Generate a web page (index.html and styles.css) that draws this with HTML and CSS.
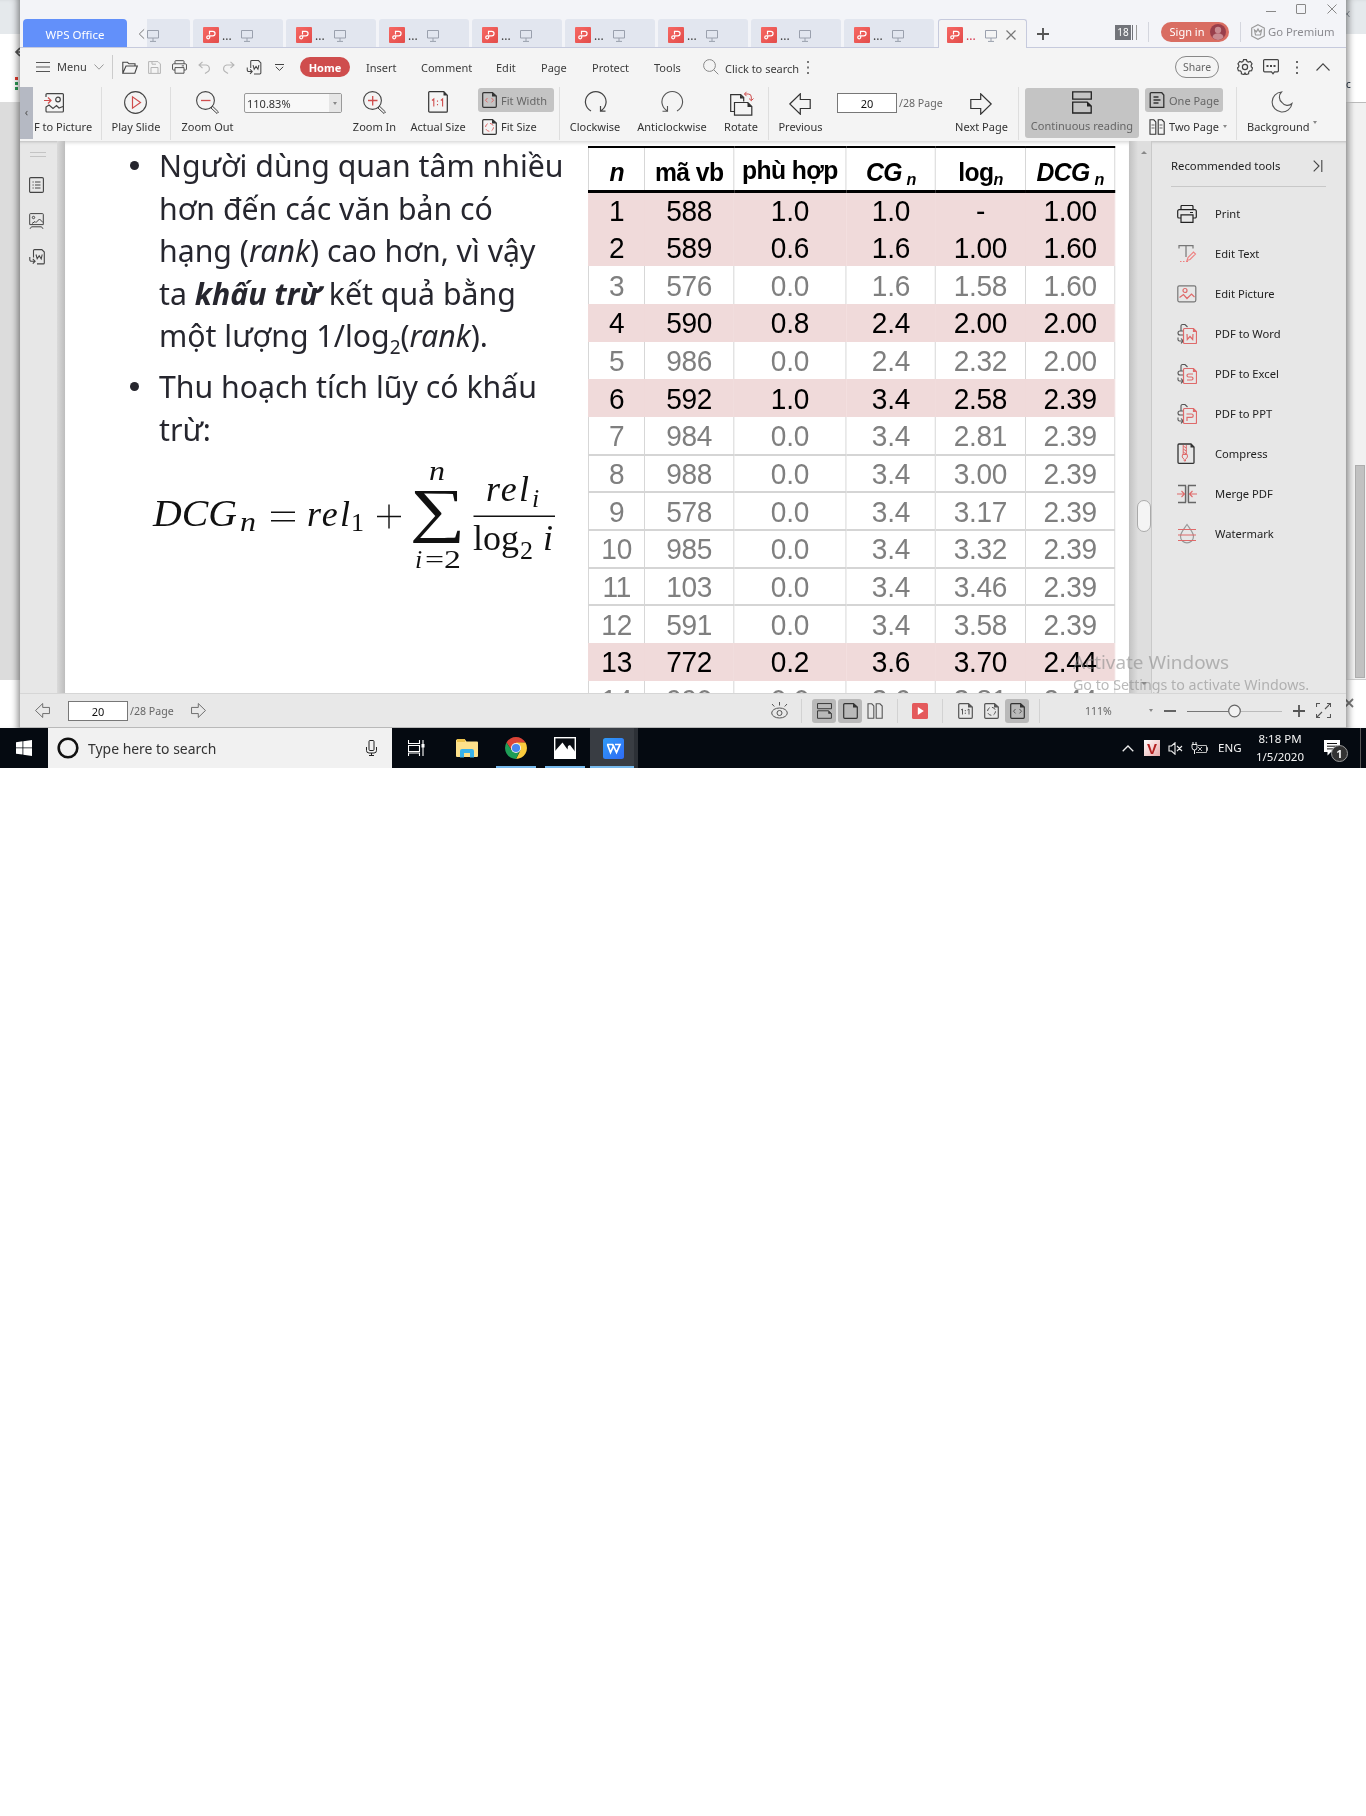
FILE: index.html
```html
<!DOCTYPE html>
<html lang="vi">
<head>
<meta charset="utf-8">
<title>WPS Office</title>
<link rel="stylesheet" href="styles.css">
</head>
<body>
<svg class="sprite" width="0" height="0">
  <defs>
    <linearGradient id="redg" x1="0" y1="0" x2="1" y2="1"><stop offset="0" stop-color="#f76863"/><stop offset="1" stop-color="#e24c4a"/></linearGradient>
    <linearGradient id="blueg" x1="0" y1="0" x2="1" y2="1"><stop offset="0" stop-color="#2f9bf8"/><stop offset="1" stop-color="#2f6bf5"/></linearGradient>
  </defs>
  <symbol id="pdf" viewBox="0 0 16 16"><rect width="16" height="16" rx="1" fill="url(#redg)"/><path d="M6.500 7.500V4.300h3.300a2.200 2.200 0 0 1 0 4.500H5.200a1.500 1.500 0 1 0 1.500 1.700V9" fill="none" stroke="#fff" stroke-width="1.200"/></symbol>
  <symbol id="monitor" viewBox="0 0 12 12"><path d="M.5.5h11v7.500H.5zM6 8v3M3 11.400h6" fill="none" stroke="#9aa0ad"/></symbol>
  <symbol id="prev" viewBox="0 0 22 22"><path d="M.8 11 11.300.8v5.700h9.900v9h-9.900v5.700z" fill="none" stroke="currentColor" stroke-width="1.200"/></symbol>
  <symbol id="next" viewBox="0 0 22 22"><path d="M21.200 11 10.700.8v5.700H.8v9h9.900v5.700z" fill="none" stroke="currentColor" stroke-width="1.200"/></symbol>
  <symbol id="print" viewBox="0 0 20 18"><path d="M4 4.500V1.500a1 1 0 0 1 1-1h10a1 1 0 0 1 1 1v3M4 13H2a1.300 1.300 0 0 1-1.300-1.300V6.300A1.500 1.500 0 0 1 2.200 4.700h15.600a1.500 1.500 0 0 1 1.500 1.600v5.400A1.300 1.300 0 0 1 18 13h-2M4 9.800h12v7.500H4zM13 7.500h3" fill="none" stroke="currentColor" stroke-width="1.200"/></symbol>
  <symbol id="toword" viewBox="0 0 16 16"><path d="M4.500 8.500V1.600A1 1 0 0 1 5.500.6h7.300l2.500 2.500v10.800a1 1 0 0 1-1 1H8M7 5.500l1.200 4.300 2-3 2 3 1-4.300M.8 8v2.700a1.500 1.500 0 0 0 1.500 1.500h3.500M3.800 9.900l2.300 2.300-2.300 2.500" fill="none" stroke="currentColor" stroke-width="1.100"/></symbol>
  <symbol id="pageframe" viewBox="0 0 15 16"><path d="M2 .7h8.500L14.300 4v10.300a1 1 0 0 1-1 1H1.700a1 1 0 0 1-1-1V1.700a1 1 0 0 1 1-1z" fill="none" stroke="currentColor" stroke-width="1.200"/><path d="M10 .5 14.500 4.500H10z" fill="currentColor"/></symbol>
  <symbol id="conv" viewBox="0 0 20 22"><path d="M4 8V3a1.500 1.500 0 0 1 1.500-1.500H8L10.500 4M6 8H3a2 2 0 0 0 0 4h3M1 14.500v2a1.500 1.500 0 0 0 1.500 1.500H6M4 15.500 6.300 18 4 20.300" fill="none" stroke="#555" stroke-width="1.100"/><path d="M7.500 5.500h9l3 3v11a1 1 0 0 1-1 1H7.500a1 1 0 0 1-1-1v-13a1 1 0 0 1 1-1zM16.500 5.500v3h3" fill="none" stroke="#df6a6a" stroke-width="1.200"/></symbol>
  <symbol id="cont" viewBox="0 0 20 23"><path d="M.7.8h18.600v7.400H.7zM.7 22V11.200h14.500l4 3.800v7z" fill="none" stroke="currentColor" stroke-width="1.300"/><path d="M15 11v4.400h4.500z" fill="currentColor"/></symbol>
  <symbol id="two" viewBox="0 0 16 16"><path d="M1 .8h3.800L6.800 3v12.200H1zM9.200.8H13L15.200 3v12.200h-6z" fill="none" stroke="currentColor" stroke-width="1.100"/></symbol>
</svg>

<div class="desktop">
  <div class="behind left">
    <div class="b-top"></div>
    <div class="b-tools">
      <svg class="back" viewBox="0 0 10 10"><path d="M6 1 2 5l4 4M2 5h8" fill="none" stroke="#555" stroke-width="1.700"/></svg>
      <div class="apps"><i></i><i></i><i></i></div>
    </div>
    <div class="b-main"></div>
    <div class="b-foot"></div>
  </div>

  <div class="window">
    <div class="tabbar">
      <div class="tab-home">WPS Office</div>
      <svg class="tab-chev" viewBox="0 0 8 12"><path d="M7 .7 1.500 6 7 11.300" fill="none" stroke="#666"/></svg>
      <div class="tab cut"><svg class="mon"><use href="#monitor"/></svg></div>
      <div class="tab"><svg class="pdf"><use href="#pdf"/></svg><span>...</span><svg class="mon"><use href="#monitor"/></svg></div>
      <div class="tab"><svg class="pdf"><use href="#pdf"/></svg><span>...</span><svg class="mon"><use href="#monitor"/></svg></div>
      <div class="tab"><svg class="pdf"><use href="#pdf"/></svg><span>...</span><svg class="mon"><use href="#monitor"/></svg></div>
      <div class="tab"><svg class="pdf"><use href="#pdf"/></svg><span>...</span><svg class="mon"><use href="#monitor"/></svg></div>
      <div class="tab"><svg class="pdf"><use href="#pdf"/></svg><span>...</span><svg class="mon"><use href="#monitor"/></svg></div>
      <div class="tab"><svg class="pdf"><use href="#pdf"/></svg><span>...</span><svg class="mon"><use href="#monitor"/></svg></div>
      <div class="tab"><svg class="pdf"><use href="#pdf"/></svg><span>...</span><svg class="mon"><use href="#monitor"/></svg></div>
      <div class="tab"><svg class="pdf"><use href="#pdf"/></svg><span>...</span><svg class="mon"><use href="#monitor"/></svg></div>
      <div class="tab active"><svg class="pdf"><use href="#pdf"/></svg><span>...</span><svg class="mon"><use href="#monitor"/></svg><svg class="x" viewBox="0 0 10 10"><path d="M.5.5l9 9M9.500.5l-9 9" stroke="#777" stroke-width="1.200"/></svg></div>
      <svg class="plus" viewBox="0 0 12 12"><path d="M6 0v12M0 6h12" stroke="#555" stroke-width="1.900"/></svg>
      <div class="account">
        <div class="winctl">
          <svg width="10" height="10"><path d="M0 7.500h10" stroke="#888"/></svg>
          <svg width="10" height="10"><path d="M1 .5h8a.5.500 0 0 1 .5.500v8a.5.500 0 0 1-.5.500H1A.5.500 0 0 1 .5 9V1A.5.500 0 0 1 1 .5z" fill="none" stroke="#888"/></svg>
          <svg width="10" height="10"><path d="M.5.5l9 9M9.500.5l-9 9" stroke="#888"/></svg>
        </div>
        <div class="acc-row">
          <span class="count">18</span><i class="stack"></i>
          <i class="vline v1"></i>
          <span class="signin">Sign in<svg width="16" height="16" viewBox="0 0 16 16"><circle cx="8" cy="8" r="8" fill="#993f4b"/><circle cx="8" cy="6" r="3.200" fill="#c98a90"/><path d="M2.500 13.500a5.500 4.200 0 0 1 11 0A8 8 0 0 1 8 16a8 8 0 0 1-5.500-2.500z" fill="#c98a90"/></svg></span>
          <i class="vline v2"></i>
          <svg class="crown" viewBox="0 0 14 16"><path d="M7 .7 13.300 4v8L7 15.300.7 12V4zM3.500 6l1 5h5l1-5-2 1.700L7 5 5.500 7.700z" fill="none" stroke="#999" stroke-width="1.200"/></svg>
          <span class="premium">Go Premium</span>
        </div>
      </div>
    </div>

    <div class="menubar">
      <svg class="burger" viewBox="0 0 14 10"><path d="M0 .5h14M0 5h14M0 9.500h14" stroke="#555"/></svg>
      <span class="m-menu">Menu</span>
      <svg class="m-chev" viewBox="0 0 10 6"><path d="M.5.5 5 5.200 9.500.5" fill="none" stroke="#999"/></svg>
      <i class="m-div"></i>
      <div class="quick">
        <svg width="16" height="13" viewBox="0 0 16 13"><path d="M.8 12.200V1.300h4.700L7 2.800h6v2M.8 12.200 4 5h11.300l-2.500 7.200z" fill="none" stroke="#444" stroke-width="1.100"/></svg>
        <svg width="13" height="13" viewBox="0 0 13 13"><path d="M.6.6h9.400l2.400 2.400v9.400H.6zM3 12V6.500h7V12M4 .6v2.600h4" fill="none" stroke="#b5b5b5"/></svg>
        <svg class="pr" width="15" height="14"><use href="#print"/></svg>
        <svg width="13" height="13" viewBox="0 0 13 13"><path d="M4.500.8 1 4l3.500 3.200M1 4h7.300a3.700 3.700 0 0 1 1 7L7 12.500" fill="none" stroke="#b5b5b5" stroke-width="1.100"/></svg>
        <svg width="13" height="13" viewBox="0 0 13 13"><path d="M8.500.8 12 4 8.500 7.200M12 4H4.700a3.700 3.700 0 0 0-1 7L6 12.500" fill="none" stroke="#b5b5b5" stroke-width="1.100"/></svg>
        <svg width="16" height="15"><use href="#toword"/></svg>
        <svg width="9" height="7" viewBox="0 0 9 7"><path d="M0 .5h9M.8 2.800 4.500 6.400 8.200 2.800" fill="none" stroke="#444"/></svg>
      </div>
      <span class="pill">Home</span>
      <span class="mi a">Insert</span><span class="mi b">Comment</span><span class="mi c">Edit</span><span class="mi d">Page</span><span class="mi e">Protect</span><span class="mi f">Tools</span>
      <svg class="find" viewBox="0 0 16 16"><circle cx="6.500" cy="6.500" r="5.900" fill="none" stroke="#888"/><path d="M10.700 10.700 15.300 15.300" stroke="#888"/></svg>
      <span class="mi g">Click to search</span>
      <svg class="dots" viewBox="0 0 3 13"><path d="M0 0h2v2H0zM0 5.500h2v2H0zM0 11h2v2H0z" fill="#777"/></svg>
      <span class="share">Share</span>
      <svg class="gear" viewBox="0 0 16 16"><path d="M6.600.7h2.800l.7 1.800 1.300.6 1.900-.6 1.700 2.200-.9 1.700.2 1.500 1.200 1-.9 2.700-1.900.2-1 1.100-.1 1.900-2.700.8L8 14l-.9 1.600-2.700-.8-.1-1.900-1-1.100-1.900-.2-.9-2.700 1.200-1 .2-1.500L1 4.700l1.700-2.200 1.900.6 1.300-.6z" fill="none" stroke="#444" stroke-width="1.200"/><circle cx="8" cy="8" r="2.600" fill="none" stroke="#444" stroke-width="1.200"/></svg>
      <svg class="chat" viewBox="0 0 16 16"><path d="M1.600.6h12.800a1 1 0 0 1 1 1v10.200a1 1 0 0 1-1 1h-3L10 14.800l-1.500-2H1.600a1 1 0 0 1-1-1V1.600a1 1 0 0 1 1-1z" fill="none" stroke="#444" stroke-width="1.200"/><path d="M3.500 6h2v2h-2zM7 6h2v2H7zM10.500 6h2v2h-2z" fill="#444"/></svg>
      <svg class="dots k" viewBox="0 0 3 13"><path d="M0 0h2v2H0zM0 5.500h2v2H0zM0 11h2v2H0z" fill="#666"/></svg>
      <svg class="up" viewBox="0 0 14 8"><path d="M.5 7.500 7 .8l6.500 6.700" fill="none" stroke="#444" stroke-width="1.100"/></svg>
    </div>

    <div class="ribbon">
      <div class="collapse">‹</div>
      <div class="tool pic"><svg width="20" height="20" viewBox="0 0 20 20"><path d="M2 4V1.600a1 1 0 0 1 1-1h15.400a1 1 0 0 1 1 1V18a1 1 0 0 1-1 1H3a1 1 0 0 1-1-1v-4l3-2 4 3.500 3.500-3 2.500 2.500 4-1.500" fill="none" stroke="#444" stroke-width="1.200"/><circle cx="14" cy="6.500" r="2.300" fill="none" stroke="#444" stroke-width="1.200"/><path d="M0 7.500h6.500M4 4.500l3 3-3 3" fill="none" stroke="#cf4d4d" stroke-width="1.200"/></svg><span>F to Picture</span></div>
      <i class="r-div"></i>
      <div class="tool play"><svg width="23" height="23" viewBox="0 0 23 23"><circle cx="11.500" cy="11.500" r="10.900" fill="none" stroke="#444" stroke-width="1.100"/><path d="M8.500 5.800v11.400l8-5.700z" fill="none" stroke="#cf4d4d" stroke-width="1.200"/></svg><span>Play Slide</span></div>
      <i class="r-div"></i>
      <div class="tool zo"><svg width="23" height="23" viewBox="0 0 23 23"><circle cx="9.500" cy="9.500" r="8.900" fill="none" stroke="#444" stroke-width="1.100"/><path d="m15 17 1.500-1.800 6 5.800-1.500 1.500z" fill="none" stroke="#444"/><path d="M5 9.500h9.500" stroke="#cf4d4d" stroke-width="1.300"/></svg><span>Zoom Out</span></div>
      <div class="combo"><span>110.83%</span><b></b></div>
      <div class="tool zi"><svg width="23" height="23" viewBox="0 0 23 23"><circle cx="9.500" cy="9.500" r="8.900" fill="none" stroke="#444" stroke-width="1.100"/><path d="m15 17 1.500-1.800 6 5.800-1.500 1.500z" fill="none" stroke="#444"/><path d="M5 9.500h9.500M9.700 5v9.500" stroke="#cf4d4d" stroke-width="1.300"/></svg><span>Zoom In</span></div>
      <div class="tool as"><svg width="20" height="22" viewBox="0 0 20 22"><path d="M1.500.7h14.300l3.500 3.500v16a1 1 0 0 1-1 1H1.700a1 1 0 0 1-1-1V1.500a.8.8 0 0 1 .8-.8z" fill="none" stroke="#333" stroke-width="1.200"/><path d="M15.500.5v4h4z" fill="#333"/><path d="m4 9.500 1.800-1.500v7.500m7-6 1.800-1.500v7.500M9.500 9.500v1.300m0 2.200v1.300" fill="none" stroke="#cf4d4d" stroke-width="1.100"/></svg><span>Actual Size</span></div>
      <div class="pair">
        <div class="opt on"><svg width="15" height="16"><use href="#pageframe"/><path d="M5.500 6 3.500 8.200l2 2.200M9.500 6l2 2.200-2 2.200" fill="none" stroke="#e06a6a"/></svg>Fit Width</div>
        <div class="opt"><svg width="15" height="16"><use href="#pageframe"/><circle cx="7.500" cy="8.300" r="4" fill="none" stroke="#e06a6a" stroke-dasharray="4 2.280"/></svg>Fit Size</div>
      </div>
      <i class="r-div d3"></i>
      <div class="tool cw"><svg width="23" height="22" viewBox="0 0 23 22"><path d="M7 20A10.300 10.300 0 1 1 16.500 20v-5m0 5.200h5" fill="none" stroke="#444" stroke-width="1.200"/></svg><span>Clockwise</span></div>
      <div class="tool acw"><svg width="23" height="22" viewBox="0 0 23 22"><path d="M16 20A10.300 10.300 0 1 0 6.500 20v-5m0 5.200h-5" fill="none" stroke="#555" stroke-width="1.100"/></svg><span>Anticlockwise</span></div>
      <div class="tool ro"><svg width="25" height="25" viewBox="0 0 25 25"><path d="M5 20.500H1.700V3.600h10l3 3v4M5.500 11.500h13.300l4 4v8.700H5.500z" fill="none" stroke="#333" stroke-width="1.200"/><path d="M11 3.500v4h4zM18.500 11v5h4.700z" fill="#333"/><path d="M17.500.8 15.500 3l2 2.200M15.500 3h3.800a3 3 0 0 1 3 3v3.500M20 7.500l2.300 2.200 2.200-2.200" fill="none" stroke="#cf4d4d"/></svg><span>Rotate</span></div>
      <i class="r-div"></i>
      <div class="tool pv"><svg width="22" height="22"><use href="#prev"/></svg><span>Previous</span></div>
      <div class="pageno">20</div><span class="of">/28 Page</span>
      <div class="tool nx"><svg width="22" height="22"><use href="#next"/></svg><span>Next Page</span></div>
      <i class="r-div"></i>
      <div class="tool cr"><svg width="20" height="23"><use href="#cont"/></svg><span>Continuous reading</span></div>
      <div class="pair two">
        <div class="opt on"><svg width="15" height="16" viewBox="0 0 15 16"><path d="M1.700.7h10.600L14.300 3v12.300H.7V1.700a1 1 0 0 1 1-1zM4 5h5M4 8h7M4 11h5" fill="none" stroke="#333" stroke-width="1.300"/></svg>One Page</div>
        <div class="opt"><svg width="16" height="16" viewBox="0 0 16 16"><use href="#two"/><path d="M2.500 6h3M2.500 9h3M10.500 6h3M10.500 9h3" stroke="#666"/></svg>Two Page<b class="car"></b></div>
      </div>
      <i class="r-div d5"></i>
      <div class="tool bg"><svg width="21" height="21" viewBox="0 0 21 21"><path d="M9.500 1A10 10 0 1 0 20 12.500a6.500 6.500 0 0 1-10-1A7 7 0 0 1 9.500 1z" fill="none" stroke="#555" stroke-width="1.100"/></svg><span>Background</span></div><b class="car bgc"></b>
    </div>

    <div class="body">
      <div class="side">
        <i class="grip"></i>
        <svg width="15" height="16" viewBox="0 0 15 16"><rect x=".6" y=".6" width="13.800" height="14.800" rx="1.200" fill="none" stroke="#444" stroke-width="1.100"/><path d="M3.500 5h1.200M6 5h5.500M3.500 8h1.200M6 8h5.500M3.500 11h1.200M6 11h5.500" stroke="#444"/></svg>
        <svg width="15" height="16" viewBox="0 0 15 16"><path d="M1.500.6h12a.8.8 0 0 1 .8.8v10.200H.7V1.400a.8.8 0 0 1 .8-.8zM3 10.500l3-2 1 1 3.500-3.500 3.500 3.500M1 15.800l1.500-2h10l1.500 2" fill="none" stroke="#444"/><circle cx="4.500" cy="4.500" r="1.200" fill="none" stroke="#444"/></svg>
        <svg class="w" width="16" height="16"><use href="#toword"/></svg>
      </div>
      <div class="gutter"></div>
      <div class="page">
        <div class="prose">
          <ul>
            <li>Người dùng quan tâm nhiều<br>hơn đến các văn bản có<br>hạng (<i>rank</i>) cao hơn, vì vậy<br>ta <b><i>khấu trừ</i></b> kết quả bằng<br>một lượng 1/log<sub>2</sub>(<i>rank</i>).</li>
            <li>Thu hoạch tích lũy có khấu<br>trừ:</li>
          </ul>
          <svg class="formula" viewBox="150 460 410 115" width="410" height="115">
            <g font-style="italic">
              <text x="153" y="526" font-size="38" textLength="84" lengthAdjust="spacingAndGlyphs">DCG</text>
              <text x="240" y="531" font-size="27" textLength="16" lengthAdjust="spacingAndGlyphs">n</text>
              <text x="307" y="526" font-size="36" textLength="43" lengthAdjust="spacing">rel</text>
              <text x="429" y="480" font-size="27" textLength="16" lengthAdjust="spacingAndGlyphs">n</text>
              <text x="415" y="568" font-size="26">i</text>
              <text x="486" y="501" font-size="36" textLength="43" lengthAdjust="spacing">rel</text>
              <text x="532" y="507" font-size="26">i</text>
              <text x="543" y="550" font-size="36">i</text>
            </g>
            <text x="351" y="531" font-size="26">1</text>
            <text x="425" y="568" font-size="26" textLength="36" lengthAdjust="spacingAndGlyphs">=2</text>
            <text x="473" y="550" font-size="36" textLength="46" lengthAdjust="spacingAndGlyphs">log</text>
            <text x="520" y="559" font-size="26">2</text>
            <text transform="translate(410 529.500) scale(1.300 1)" font-size="60">∑</text>
            <path d="M271 512.300h24M271 520.700h24M377 516.500h24M389 504.500v24M473.500 516.300h81.500" stroke="#111" stroke-width="1.400"/>
          </svg>
        </div>
        <table>
          <colgroup><col class="c1"><col class="c2"><col class="c3"><col class="c4"><col class="c5"><col class="c6"></colgroup>
          <tr class="head"><th><i>n</i></th><th>mã vb</th><th class="ph">phù hợp</th><th><i>CG<sub class="sp">n</sub></i></th><th>log<sub><i>n</i></sub></th><th><i>DCG<sub class="sp">n</sub></i></th></tr>
          <tr class="hit"><td>1</td><td>588</td><td>1.0</td><td>1.0</td><td>-</td><td>1.00</td></tr>
          <tr class="hit"><td>2</td><td>589</td><td>0.6</td><td>1.6</td><td>1.00</td><td>1.60</td></tr>
          <tr><td>3</td><td>576</td><td>0.0</td><td>1.6</td><td>1.58</td><td>1.60</td></tr>
          <tr class="hit"><td>4</td><td>590</td><td>0.8</td><td>2.4</td><td>2.00</td><td>2.00</td></tr>
          <tr><td>5</td><td>986</td><td>0.0</td><td>2.4</td><td>2.32</td><td>2.00</td></tr>
          <tr class="hit"><td>6</td><td>592</td><td>1.0</td><td>3.4</td><td>2.58</td><td>2.39</td></tr>
          <tr><td>7</td><td>984</td><td>0.0</td><td>3.4</td><td>2.81</td><td>2.39</td></tr>
          <tr class="ln"><td>8</td><td>988</td><td>0.0</td><td>3.4</td><td>3.00</td><td>2.39</td></tr>
          <tr class="ln"><td>9</td><td>578</td><td>0.0</td><td>3.4</td><td>3.17</td><td>2.39</td></tr>
          <tr class="ln"><td>10</td><td>985</td><td>0.0</td><td>3.4</td><td>3.32</td><td>2.39</td></tr>
          <tr class="ln"><td>11</td><td>103</td><td>0.0</td><td>3.4</td><td>3.46</td><td>2.39</td></tr>
          <tr class="ln"><td>12</td><td>591</td><td>0.0</td><td>3.4</td><td>3.58</td><td>2.39</td></tr>
          <tr class="hit"><td>13</td><td>772</td><td>0.2</td><td>3.6</td><td>3.70</td><td>2.44</td></tr>
          <tr><td>14</td><td>990</td><td>0.0</td><td>3.6</td><td>3.81</td><td>2.44</td></tr>
        </table>
      </div>
      <div class="scroll"><b class="s-up"></b><b class="thumb"></b><b class="s-dn"></b></div>
      <div class="panel">
        <div class="p-head"><span>Recommended tools</span><svg width="10" height="12" viewBox="0 0 10 12"><path d="M.7.7 6 6 .7 11.300M8.800 0v12" fill="none" stroke="#444" stroke-width="1.100"/></svg></div>
        <div class="p-item"><svg><use href="#print" x="0" y="2" width="20" height="18"/></svg>Print</div>
        <div class="p-item"><svg><path d="M2 5.500V2.700h14v2.800M9 2.700V14" fill="none" stroke="#777" stroke-width="1.200"/><path d="m10 17.500 1-3 5.500-5.500 2 2-5.500 5.500zM3 18.500h1.500M6 18.500h1.500M9 18.500h2" fill="none" stroke="#ee8080" stroke-width="1.100"/></svg>Edit Text</div>
        <div class="p-item"><svg><rect x=".8" y="2.800" width="18" height="16" rx="1.500" fill="none" stroke="#777" stroke-width="1.200"/><path d="m2.500 14.500 4-3 3.500 4 4.500-4.500 3 3" fill="none" stroke="#df6a6a" stroke-width="1.200"/><circle cx="8" cy="7.500" r="2" fill="none" stroke="#df6a6a" stroke-width="1.200"/></svg>Edit Picture</div>
        <div class="p-item"><svg><use href="#conv"/><path d="m10 11 .3 5.500 2.700-3 2.700 3 .3-5.500" fill="none" stroke="#df6a6a" stroke-width="1.200"/></svg>PDF to Word</div>
        <div class="p-item"><svg><use href="#conv"/><path d="M16 11h-4.500c-2 0-2 3 0 3h3c2 0 2 3 0 3H10" fill="none" stroke="#df6a6a" stroke-width="1.200"/></svg>PDF to Excel</div>
        <div class="p-item"><svg><use href="#conv"/><path d="M9.500 11h5c2.300 0 2.300 3.300 0 3.300H10V18" fill="none" stroke="#df6a6a" stroke-width="1.200"/></svg>PDF to PPT</div>
        <div class="p-item"><svg><path d="M2 1h12l3 3v15.500a.8.800 0 0 1-.8.800H2a1 1 0 0 1-1-1V2a1 1 0 0 1 1-1z" fill="none" stroke="#333" stroke-width="1.300"/><path d="M13.500.7v3.800h3.800z" fill="#333"/><path d="M6.200 2v9M9.300 2v9M6.200 3l3 2M6.200 6l3 2M6.200 9l3 2M5.500 11.500h4.700l.3 2.500-2 2.500v1.500H7.200v-1.500L5.200 14z" fill="none" stroke="#df6a6a"/></svg>Compress</div>
        <div class="p-item"><svg><path d="M9 3h2v16H9z" fill="#ccc"/><path d="M1 2.500h7.500v17H1M19 2.500h-7.500v17H19" fill="none" stroke="#666" stroke-width="1.300"/><path d="M0 11h7M4.500 8l3 3-3 3M20 11h-7M15.500 8l-3 3 3 3" fill="none" stroke="#df6a6a" stroke-width="1.100"/></svg>Merge PDF</div>
        <div class="p-item"><svg><path d="M10 1.500c3 4.500 6.500 8 6.500 12a6.500 6.300 0 0 1-13 0c0-4 3.500-7.500 6.500-12z" fill="none" stroke="#999" stroke-width="1.200"/><path d="M1 6.500h18M1 12h18M1 17.500h18" stroke="#df6a6a" stroke-width="1.100"/></svg>Watermark</div>
      </div>
      <div class="activate"><div>Activate Windows</div><p>Go to Settings to activate Windows.</p></div>
    </div>

    <div class="status">
      <svg class="s-pv" width="15" height="15"><use href="#prev"/></svg>
      <div class="pageno">20</div><span class="of">/28 Page</span>
      <svg class="s-nx" width="15" height="15"><use href="#next"/></svg>
      <svg class="eye" width="17" height="17" viewBox="0 0 17 17"><ellipse cx="8.500" cy="11" rx="7.800" ry="5" fill="none" stroke="#555"/><circle cx="8.500" cy="11" r="2.500" fill="none" stroke="#555"/><path d="M8.500 0v3.500M1 2l2.300 2.500M16 2l-2.300 2.500" stroke="#555"/></svg>
      <i class="sd"></i>
      <span class="sb on q1"><svg width="15" height="16" viewBox="0 0 20 23" preserveAspectRatio="none"><use href="#cont" width="20" height="23"/></svg></span>
      <span class="sb on q2"><svg width="15" height="16"><use href="#pageframe"/></svg></span>
      <svg class="q3" width="16" height="16"><use href="#two"/></svg>
      <i class="sd e2"></i>
      <svg class="ply" width="16" height="16"><rect width="16" height="16" rx="1.500" fill="#e45a5c"/><path d="M5.800 4v8l6-4z" fill="#fff"/></svg>
      <i class="sd e3"></i>
      <svg class="q4" width="15" height="16"><use href="#pageframe"/><path d="m3 7 1.500-1v5.500M9.500 7 11 6v5.500M7.300 7v1.200m0 1.500v1.200" fill="none" stroke="#555"/></svg>
      <svg class="q5" width="15" height="16"><use href="#pageframe"/><circle cx="7.500" cy="8.300" r="4" fill="none" stroke="#555" stroke-dasharray="4 2.280"/></svg>
      <span class="sb on q6"><svg width="15" height="16"><use href="#pageframe"/><path d="M5.500 6 3.500 8.200l2 2.200M9.500 6l2 2.200-2 2.200" fill="none" stroke="#555"/></svg></span>
      <i class="sd e4"></i>
      <span class="pct">111%</span><b class="car"></b>
      <svg class="mn" width="12" height="12"><path d="M0 6h12" stroke="#555" stroke-width="1.800"/></svg>
      <svg class="sl" width="95" height="14"><path d="M0 7.500h47" stroke="#777"/><path d="M47 7.500h48" stroke="#bbb"/><circle cx="47.500" cy="7" r="5.800" fill="#f2f2f2" stroke="#666" stroke-width="1.200"/></svg>
      <svg class="pl" width="12" height="12"><path d="M6 0v12M0 6h12" stroke="#555" stroke-width="1.800"/></svg>
      <svg class="ex" width="15" height="15"><path d="M.5 4V.5H4M11 .5h3.500V4M14.500 11v3.500H11M4 14.500H.5V11M9 6l5-5M6 9l-5 5" fill="none" stroke="#555" stroke-width="1.100"/></svg>
    </div>
  </div>

  <div class="behind right">
    <div class="b-top"><svg width="4" height="8"><path d="M0 4h2M3.500 1 1 4l2.500 3" fill="none" stroke="#8a929b"/></svg></div>
    <div class="b-tools"><span>c</span></div>
    <div class="b-bar"><i></i></div>
    <div class="b-foot"><svg width="10" height="10"><path d="m-1 1 8 8M7 1-1 9" stroke="#777" stroke-width="1.800"/></svg></div>
  </div>
</div>

<div class="taskbar">
  <div class="start"><svg width="16" height="16" viewBox="0 0 16 16"><path d="M0 2.300 6.500 1.300v6.200H0zM7.300 1.200 16 0v7.500H7.300zM0 8.300h6.500v6.300L0 13.700zM7.300 8.300H16V16l-8.700-1.200z" fill="#fff"/></svg></div>
  <div class="find-box"><svg width="22" height="22"><circle cx="11" cy="11" r="9.300" fill="none" stroke="#111" stroke-width="2.600"/></svg><span>Type here to search</span><svg class="mic" width="11" height="16" viewBox="0 0 11 16"><rect x="3" y=".5" width="5" height="10" rx="1" fill="none" stroke="#222"/><path d="M.5 7v3.500a2.500 2.500 0 0 0 2.500 2.500h5a2.500 2.500 0 0 0 2.500-2.500V7M5.500 13v2.500M3 15.500h5" fill="none" stroke="#222"/></svg></div>
  <div class="app tv"><svg width="17" height="16"><path d="M.5 0v3.500h11V0M.5 5.500h11v6H.5zM.5 16v-3h11v3M15 0v16" fill="none" stroke="#fff" stroke-width="1.100"/><path d="M13.500 4h3v3.500h-3z" fill="#fff"/></svg></div>
  <div class="app ex1"><svg width="22" height="19"><path d="M0 1.500A1 1 0 0 1 1 .5h8l1.500 2H21a1 1 0 0 1 1 1v13.500a1 1 0 0 1-1 1H1a1 1 0 0 1-1-1z" fill="#fde18b"/><path d="M1 0h8v3H1z" fill="#edc34c"/><path d="M4 18.500V12a2 2 0 0 1 2-2h10a2 2 0 0 1 2 2v6.500h-4V14H8v4.500z" fill="#38b2ea"/></svg></div>
  <div class="app run ch"><svg width="22" height="22" viewBox="-11 -11 22 22"><path d="M-9.500-5.500A11 11 0 0 1 9.500-5.500L0-5-4.300 2.500z" fill="#db4437"/><path d="M9.500-5.500A11 11 0 0 1 0 11L4.300 2.500 0-5.500z" fill="#fbcb3c"/><path d="M0 11A11 11 0 0 1-9.500-5.500L-4.300 2.500 0 5 3.800 3z" fill="#1f9d57"/><circle r="5" fill="#f4f4f4"/><circle r="4.100" fill="#4787f0"/></svg></div>
  <div class="app run ph2"><svg width="22" height="22"><rect x=".7" y=".7" width="20.600" height="20.600" fill="#080c12" stroke="#fff" stroke-width="1.400"/><path d="m1 14 7.500-8.500 5 7 .5-3.500 2-1 5 6.500v6.500H1z" fill="#fff"/></svg></div>
  <div class="app run wps"><svg width="21" height="21"><rect width="21" height="21" rx="2.500" fill="url(#blueg)"/><path d="M4 6.500h5.500l1.500 3M4.500 6.500l3 8 3-6.500 3 6.500 3.500-8H12" fill="none" stroke="#fff" stroke-width="1.700"/></svg></div>
  <div class="tray">
    <svg class="t1" width="12" height="7"><path d="m.7 6.300 5.300-5.300 5.300 5.300" fill="none" stroke="#eee" stroke-width="1.300"/></svg>
    <span class="vk">V</span>
    <svg class="t2" width="15" height="13"><path d="M1 4h2.500L7 .8v11.400L3.500 9H1zM9 4l5 5M14 4 9 9" fill="none" stroke="#eee" stroke-width="1.100"/></svg>
    <svg class="t3" width="17" height="13"><path d="M1 2.500h5v3a2.500 2.500 0 0 1-5 0zM2 0v2.500M5 0v2.500M3.500 8v4" fill="none" stroke="#eee"/><path d="M7 3.500h8.500v7H5M15.500 5.500h1v3h-1M7 5l4 4M11 5 7 9" fill="none" stroke="#bbb"/></svg>
    <span class="eng">ENG</span>
    <span class="clock">8:18 PM<br>1/5/2020</span>
    <span class="note"><svg width="17" height="16"><path d="M0 0h16v12H7l-3.500 3.500V12H0z" fill="#fff"/><path d="M3 3.500h10M3 6.200h10M3 8.900h7" stroke="#111"/></svg><b>1</b></span>
    <i class="peek"></i>
  </div>
</div>
</body>
</html>
```
FILE: styles.css
```css
* { box-sizing: border-box; }
body { margin: 0; background: #fff; font-family: "Noto Sans", "Open Sans", sans-serif; font-size: 11px; color: #333; line-height: 16px; }
.sprite { display: block; height: 0; }
svg { flex: none; display: block; }
i, b { flex: none; }
.desktop { display: flex; width: 1366px; height: 728px; overflow: hidden; }

/* windows showing at both edges */
.behind { width: 20px; flex: none; display: flex; flex-direction: column; overflow: hidden; }
.b-top { height: 34px; background: #e5e9ec; }
.b-tools { height: 68px; background: #fff; }
.b-main { height: 578px; background: #dcdcdc; }
.b-foot { flex: 1; background: #fff; }
.left { box-shadow: inset -7px 0 7px -5px #888; }
.left > div { background-clip: padding-box; mix-blend-mode: multiply; }
.back { width: 10px; height: 10px; margin: 13px 0 0 14px; }
.left .b-tools { padding-top: 0; display: flex; flex-direction: column; }
.apps { display: grid; gap: 2px; margin: 20px 0 0 15px; width: 3px; }
.apps i { height: 3px; background: #2d9a56; }
.apps i:first-child { background: #e33a2c; }
.right { box-shadow: inset 7px 0 7px -5px #888; }
.right > div { mix-blend-mode: multiply; }
.right .b-top { padding-top: 10px; }
.right .b-tools span { display: block; padding-top: 42px; font-size: 10px; color: #234; }
.b-bar { height: 578px; background: #f1f1f1; border-top: 1px solid #bbb; border-bottom: 1px solid #ccc; border-left: 7px solid #eee; padding: 362px 1px 0 2px; }
.b-bar i { display: block; height: 213px; background: #c1c1c1; border: 1px solid #adadad; }
.right .b-foot svg { margin-top: 18px; }

.window { width: 1326px; flex: none; display: flex; flex-direction: column; background: #f4f4f4; }

/* tabs */
.tabbar { height: 48px; background: #f3f4f8; border-bottom: 1px solid #c6cadd; display: flex; align-items: flex-end; padding-left: 3px; }
.tab-home { width: 104px; height: 28px; background: #6290fa; color: #fff; border-radius: 4px 4px 0 0; text-align: center; font-size: 11.500px; line-height: 31px; }
.tab-chev { width: 7px; height: 12px; margin: 0 2px 7px 11px; }
.tab { width: 90px; height: 28px; margin-right: 3px; background: #e2e6ef; border-radius: 3px 3px 0 0; display: flex; align-items: center; padding: 4px 0 0 10px; flex: none; }
.tab .pdf { width: 16px; height: 16px; }
.tab span { width: 12px; margin: 2px 7px 0 3px; font-size: 12px; color: #444; }
.tab .mon { width: 12px; height: 12px; margin-top: 1px; }
.tab.cut { width: 43px; padding-left: 0; border-radius: 0 3px 0 0; }
.tab.active { width: 89px; height: 29px; margin: 0 0 -1px 1px; background: #f4f4f4; border: 1px solid #c6cadd; border-bottom: 0; padding-left: 8px; padding-top: 2px; }
.tab.active span { color: #d8344a; }
.tab .x { width: 10px; height: 10px; margin-left: 9px; }
.plus { width: 12px; height: 12px; margin: 0 0 7px 10px; }
.account { flex: 1; height: 47px; display: flex; flex-direction: column; }
.winctl { display: flex; gap: 20px; justify-content: flex-end; padding: 4px 9px 0 0; height: 18px; }
.winctl svg:nth-child(2) { margin-right: 1px; }
.acc-row { display: flex; align-items: center; height: 28px; margin-left: 66px; }
.count { width: 16px; height: 15px; background: #72747a; color: #fff; font-size: 10px; line-height: 15px; text-align: center; margin-top: 1px; }
.stack { width: 5px; height: 15px; border: solid #72747a; border-width: 0 1px; margin: 1px 0 0 1px; border-right-color: #999; }
.vline { width: 1px; height: 20px; background: #d4d6de; }
.v1 { margin-left: 11px; } .v2 { margin: 0 10px 0 11px; }
.signin { display: flex; align-items: center; width: 68px; height: 20px; margin-left: 12px; border-radius: 10px; background: #d96d62; color: #fff; padding: 0 3px 0 8.500px; font-size: 11px; justify-content: space-between; }
.crown { width: 14px; height: 16px; margin-right: 3px; }
.premium { color: #8b8b90; font-size: 11.300px; white-space: nowrap; }

/* menu bar */
.menubar { height: 38px; display: flex; align-items: center; padding-left: 16px; color: #3c3c3c; }
.burger { width: 14px; height: 10px; }
.m-menu { width: 37px; margin-left: 7px; font-size: 11px; }
.m-chev { width: 10px; height: 6px; }
.m-div { width: 1px; height: 24px; background: #ccc; margin: 0 9px 0 8px; }
.quick { display: flex; align-items: center; width: 178px; gap: 11px; color: #444; }
.quick svg:nth-child(2) { margin-left: -1px; }
.quick svg:nth-child(7) { margin-left: 2px; }
.pill { width: 50px; height: 20px; background: #cf4d4d; color: #fff; font-weight: 700; border-radius: 10px; text-align: center; line-height: 21px; margin-top: -1px; }
.mi { white-space: nowrap; padding-top: 2px; font-size: 11px; flex: none; }
.a { margin-left: 16px; width: 55px; } .b { width: 75px; } .c { width: 45px; } .d { width: 51px; } .e { width: 62px; } .f { width: 49px; }
.find { width: 16px; height: 16px; margin-right: 6px; }
.g { width: 82px; padding-top: 3px; }
.dots { width: 3px; height: 13px; }
.share { margin-left: 365px; width: 44px; height: 22px; border: 1px solid #888; border-radius: 11px; text-align: center; line-height: 20px; color: #666; flex: none; font-size: 10.500px; }
.gear { width: 16px; height: 16px; margin-left: 18px; }
.chat { width: 16px; height: 16px; margin-left: 10px; }
.k { margin-left: 17px; }
.up { width: 14px; height: 8px; margin-left: 17px; }

/* ribbon */
.ribbon { height: 55px; display: flex; align-items: flex-start; padding-top: 1px; }
.collapse { width: 13px; height: 52px; background: #b5b9c3; color: #555; text-align: center; line-height: 50px; flex: none; }
.r-div { width: 1px; height: 53px; background: #dedede; }
.tool { height: 50px; display: flex; flex-direction: column; align-items: center; flex: none; white-space: nowrap; justify-content: space-between; padding-top: 4px; }
.tool span { height: 20px; line-height: 20px; }
.tool svg { overflow: visible; }
.pic { width: 68px; align-items: flex-start; overflow: hidden; padding-top: 6px; }
.pic svg { margin-left: 11px; }
.pic span { margin-left: 1px; }
.play { width: 68px; } .zo { width: 73px; } .zi { width: 65px; } .as { width: 62px; }
.play svg { margin-left: -1px; }
.combo { width: 98px; height: 20px; margin-top: 6px; border: 1px solid #9a9a9a; border-radius: 2px; display: flex; justify-content: space-between; background: #f8f8f8; flex: none; padding-left: 2px; line-height: 20px; }
.combo b { width: 12px; background: #e6e6e6; display: grid; place-items: center; }
.combo b::after, .car { content: ""; width: 0; height: 0; border: 2.500px solid transparent; border-top: 3px solid #888; border-bottom: 0; }
.pair { width: 76px; margin: 1px 0 0 9px; display: flex; flex-direction: column; gap: 1px; flex: none; }
.opt { height: 25px; display: flex; align-items: center; gap: 4px; padding-left: 4px; white-space: nowrap; color: #333; }
.opt.on { height: 24px; background: #c4c4c4; border-radius: 3px; color: #666; margin-bottom: 1px; padding-top: 1px; }
.opt.on svg { margin-top: -1px; }
.opt svg { color: #333; }
.d3 { margin-left: 5px; }
.cw { width: 70px; } .acw { width: 84px; } .ro { width: 54px; } .pv { width: 63px; }
.pv svg, .nx svg { margin: 2px 1px 0 0; }
.pageno { width: 60px; height: 20px; border: 1px solid #777; background: #fff; color: #111; text-align: center; line-height: 20px; flex: none; margin-top: 6px; margin-left: 5px; }
.of { width: 46px; margin: 8px 0 0 2px; color: #666; flex: none; white-space: nowrap; font-size: 10.600px; }
.nx { width: 73px; }
.cr { width: 114px; background: #c4c4c4; border-radius: 3px; color: #666; margin: 1px 6px 0 6px; padding-top: 3px; }
.cr svg { color: #222; margin-right: 1px; }
.cr span { height: 22px; }
.two { width: 78px; margin-left: 0; }
.two .opt svg { width: 16px; }
.two .opt { padding-left: 4px; }
.car { display: block; }
.opt .car { flex: none; }
.d5 { margin-left: 13px; }
.bg { width: 83px; align-items: flex-start; }
.bg svg { margin-left: 35px; }
.bg span { margin-left: 10px; }
.bgc { margin: 34px 0 0 -7px; }

/* document area */
.body { height: 552px; display: flex; position: relative; overflow: hidden; background: #e7e7e7; box-shadow: inset 0 3px 3px -2px #bbb; }
.side { width: 37px; flex: none; display: flex; flex-direction: column; align-items: center; color: #444; padding-right: 4px; }
.grip { width: 16px; height: 5px; border: solid #c4c4c4; border-width: 1px 0; margin: 11px 0 20px 3px; }
.side svg { margin-bottom: 20px; }
.side .w { margin-left: 1px; }
.gutter { width: 8px; flex: none; background: linear-gradient(90deg, #dadada, #bdbdbd); }
.page { width: 1064px; flex: none; background: #fff; display: flex; overflow: hidden; box-shadow: inset 0 4px 4px -3px #ccc; }
.prose { width: 523px; flex: none; color: #26262e; }
.prose ul { list-style: none; margin: 0; padding: 4px 0 0 94px; font-size: 30.250px; line-height: 42.500px; white-space: nowrap; }
.prose li { margin-bottom: 8.500px; display: block; }
.prose li::before { content: ""; float: left; width: 9px; height: 9px; border-radius: 5px; background: #26262e; margin: 16px 0 0 -29px; }
.prose sub { font-size: 19px; line-height: 0; vertical-align: -7px; }
.formula { margin: 4px 0 0 85px; fill: #111; font-family: "Liberation Serif", serif; overflow: visible; }

/* results table, set in a slightly condensed face */
table { margin-top: 5px; width: 554px; height: 572px; flex: none; table-layout: fixed; border-collapse: collapse; font-family: "Liberation Sans", sans-serif; color: #7f7f7f; font-size: 29.500px; letter-spacing: -.3px; align-self: flex-start; transform: scaleX(.95); transform-origin: 0 0; }
.c1 { width: 59.400px; } .c2 { width: 93.300px; } .c3 { width: 118.700px; } .c4 { width: 93.900px; } .c5 { width: 94.700px; } .c6 { width: 94px; }
tr { height: 37.670px; }
td, th { padding: 0; text-align: center; border: solid #d5d5d5; border-width: 0 1.500px; line-height: 30px; white-space: nowrap; }
td { padding-top: 1px; }
.head { height: 44px; color: #000; font-size: 26px; }
.head th { border-top: 2px solid #000; border-bottom: 3px solid #000; letter-spacing: -.6px; padding-top: 6px; }
.head .ph { padding-top: 3px; }
th sub { font-size: 17px; vertical-align: -4px; line-height: 0; }
.sp { margin-left: 5px; }
.hit { background: #f0dada; color: #000; }
.hit td { border-color: #f0dada; }
.ln td { border-top: 2px solid #d5d5d5; }
.scroll { width: 23px; flex: none; border-right: 1px solid #c9c9c9; background: linear-gradient(90deg, #c2c2c2, #dedede 9px); display: flex; flex-direction: column; align-items: flex-end; }
.s-up, .s-dn { width: 0; height: 0; border: 3px solid transparent; margin-right: 4px; }
.s-up { border-bottom: 3px solid #888; border-top: 0; margin-top: 10px; }
.thumb { width: 14px; height: 32px; border: 1px solid #aaa; border-radius: 7px; background: #f4f4f4; margin-top: 346px; }
.s-dn { border-top: 3px solid #888; border-bottom: 0; margin-top: 150px; }
.panel { flex: 1; padding: 5px 20px 0 19px; color: #222; font-size: 11.200px; }
.p-head { height: 41px; border-bottom: 1px solid #c8c8c8; display: flex; align-items: center; justify-content: space-between; margin-bottom: 7px; padding-right: 3px; white-space: nowrap; font-size: 11.300px; }
.p-item { height: 40px; display: flex; align-items: center; padding-left: 6px; gap: 18px; }
.p-item svg { width: 20px; height: 22px; }
.activate { position: absolute; left: 1053px; top: 508px; color: rgba(140,140,140,.6); white-space: nowrap; }
.activate div { font-size: 18.900px; line-height: 26px; }
.activate p { margin: 0; font-size: 14.250px; line-height: 20px; }

/* status bar */
.status { height: 35px; background: #e8e8e8; border-top: 1px solid #d6d6d6; border-bottom: 1px solid #b9b9b9; display: flex; align-items: center; padding-left: 15px; color: #555; }
.status .pageno { margin: 0 0 0 18px; }
.status .of { margin: 0 0 0 2px; width: 61px; }
.eye { margin-left: 565px; }
.sd { width: 1px; height: 24px; background: #d2d2d2; margin: 0 10px 0 13px; }
.sb { width: 24px; height: 24px; border-radius: 3px; display: grid; place-items: center; color: #333; flex: none; }
.sb.on { background: #b9b9b9; }
.q2 { margin: 0 5px 0 2px; }
.e2 { margin: 0 14px; } .e3 { margin: 0 15px 0 14px; } .q5 { margin: 0 6px 0 11px; } .e4 { margin: 0 45px 0 10px; }
.pct { width: 64px; flex: none; color: #666; font-size: 10.500px; }
.mn { margin-left: 11px; } .sl { margin: 0 11px; } .ex { margin-left: 11px; }

/* taskbar */
.taskbar { width: 1366px; height: 40px; background: #050a11; display: flex; }
.start { width: 48px; display: grid; place-items: center; flex: none; }
.find-box { width: 344px; background: #f1f1f1; display: flex; align-items: center; padding-left: 9px; color: #333; font-size: 13.950px; flex: none; }
.find-box span { width: 278px; margin-left: 9px; padding-top: 1px; }
.app { display: grid; place-items: center; flex: none; width: 40px; height: 40px; }
.tv { margin-left: 4px; } .ex1 { margin-left: 11px; } .ch { margin-left: 9px; } .ph2 { margin: 0 5px 0 9px; }
.wps { width: 48px; padding-left: 3px; background: #393d43; border-right: 4px solid #2c3036; }
.run { box-shadow: inset 0 -2px #76b9ed; }
.tray { flex: 1; display: flex; align-items: center; color: #f4f4f4; padding-left: 484px; }
.vk { width: 16px; height: 16px; margin: 0 8px 0 10px; background: linear-gradient(135deg, #fff, #e9a9a9); color: #b32020; font: 700 15px/17px "Liberation Sans", sans-serif; text-align: center; }
.t3 { margin-left: 8px; }
.eng { margin-left: 10px; width: 26px; font-size: 11.500px; }
.clock { width: 74px; margin-left: -1px; text-align: center; line-height: 18px; font-size: 11.500px; }
.note { display: flex; width: 36px; margin-left: 7px; position: relative; }
.note b { position: absolute; left: 7px; top: 5px; width: 17px; height: 17px; border-radius: 9px; border: 1px solid #999; background: #333; text-align: center; line-height: 15px; font-size: 11px; }
.peek { width: 1px; height: 40px; background: #555; }
```
